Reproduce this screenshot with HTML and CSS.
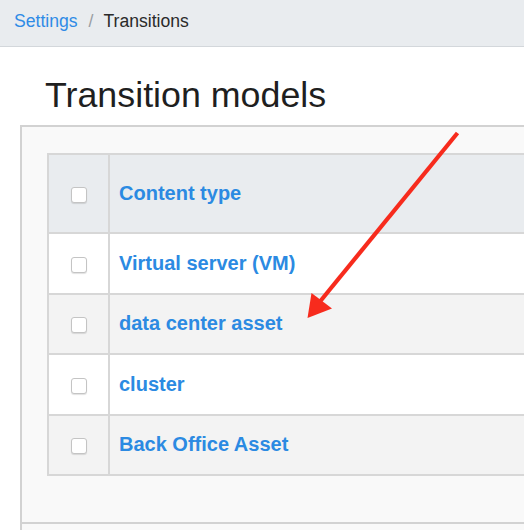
FILE: index.html
```html
<!DOCTYPE html>
<html>
<head>
<meta charset="utf-8">
<link rel="stylesheet" href="styles.css">
</head>
<body>
<nav class="crumbs">
  <a class="crumb-link" href="#">Settings</a>
  <span class="crumb-sep">/</span>
  <span class="crumb-current">Transitions</span>
</nav>
<h1 class="title">Transition models</h1>
<section class="panel">
  <div class="panel-body">
    <table class="grid">
      <thead>
        <tr class="head-row">
          <th class="check-cell"><span class="box"></span></th>
          <th class="name-cell"><a href="#">Content type</a></th>
        </tr>
      </thead>
      <tbody>
        <tr class="row odd">
          <td class="check-cell"><span class="box"></span></td>
          <td class="name-cell"><a href="#">Virtual server (VM)</a></td>
        </tr>
        <tr class="row even">
          <td class="check-cell"><span class="box"></span></td>
          <td class="name-cell"><a href="#">data center asset</a></td>
        </tr>
        <tr class="row odd">
          <td class="check-cell"><span class="box"></span></td>
          <td class="name-cell"><a href="#">cluster</a></td>
        </tr>
        <tr class="row even">
          <td class="check-cell"><span class="box"></span></td>
          <td class="name-cell"><a href="#">Back Office Asset</a></td>
        </tr>
      </tbody>
    </table>
  </div>
  <div class="panel-foot"></div>
</section>
<svg class="arrow" width="524" height="530" viewBox="0 0 524 530">
  <line x1="457.5" y1="133" x2="318" y2="304" stroke="#f72b1d" stroke-width="4.2" stroke-linecap="butt"/>
  <polygon points="307.5,318 311.5,293 332,308.5" fill="#f72b1d"/>
</svg>
</body>
</html>
```
FILE: styles.css
```css
html, body {
  margin: 0;
  padding: 0;
  background: #ffffff;
  width: 524px;
  height: 530px;
  overflow: hidden;
}
body {
  font-family: "Liberation Sans", Arial, sans-serif;
  color: #222222;
  position: relative;
}
.crumbs {
  height: 43px;
  padding-bottom: 3px;
  background: #e9ecef;
  border-bottom: 1px solid #d3d7db;
  display: flex;
  align-items: center;
  padding-left: 14px;
  font-size: 17.6px;
  box-sizing: content-box;
}
.crumb-link {
  color: #2f8be6;
  text-decoration: none;
}
.crumb-sep {
  color: #9a9ea3;
  margin: 0 10px 0 11px;
}
.crumb-current {
  color: #2a2a2a;
}
.title {
  margin: 27px 0 8px 45px;
  font-size: 35.8px;
  font-weight: normal;
  line-height: 43px;
  color: #1f1f1f;
}
.panel {
  margin-left: 20px;
  width: 700px;
  background: #f9f9f9;
  border: 2px solid #d2d2d2;
}
.panel-body {
  padding: 26px 0 46px 25px;
}
.panel-foot {
  border-top: 2px solid #d2d2d2;
  height: 40px;
}
.grid {
  border-collapse: collapse;
  width: 680px;
  border: 2px solid #d7d7d7;
}
.grid th, .grid td {
  border: 2px solid #d7d7d7;
  padding: 0;
  vertical-align: middle;
}
.head-row {
  height: 79px;
  background: #e9ecef;
}
.row {
  height: 60.5px;
}
.row.odd { background: #ffffff; }
.row.even { background: #f3f3f3; }
.check-cell {
  width: 59px;
  text-align: center;
}
.name-cell {
  text-align: left;
  padding-left: 9px !important;
  font-size: 20px;
  font-weight: bold;
}
.name-cell a {
  color: #2b8ae2;
  text-decoration: none;
}
.box {
  display: inline-block;
  width: 14px;
  height: 14px;
  border: 1px solid #c4c4c4;
  border-radius: 3px;
  background: #ffffff;
  box-shadow: 0 1px 1px rgba(0,0,0,0.12);
  vertical-align: middle;
  margin-top: 2px;
}
.arrow {
  position: absolute;
  left: 0;
  top: 0;
  pointer-events: none;
}
```
